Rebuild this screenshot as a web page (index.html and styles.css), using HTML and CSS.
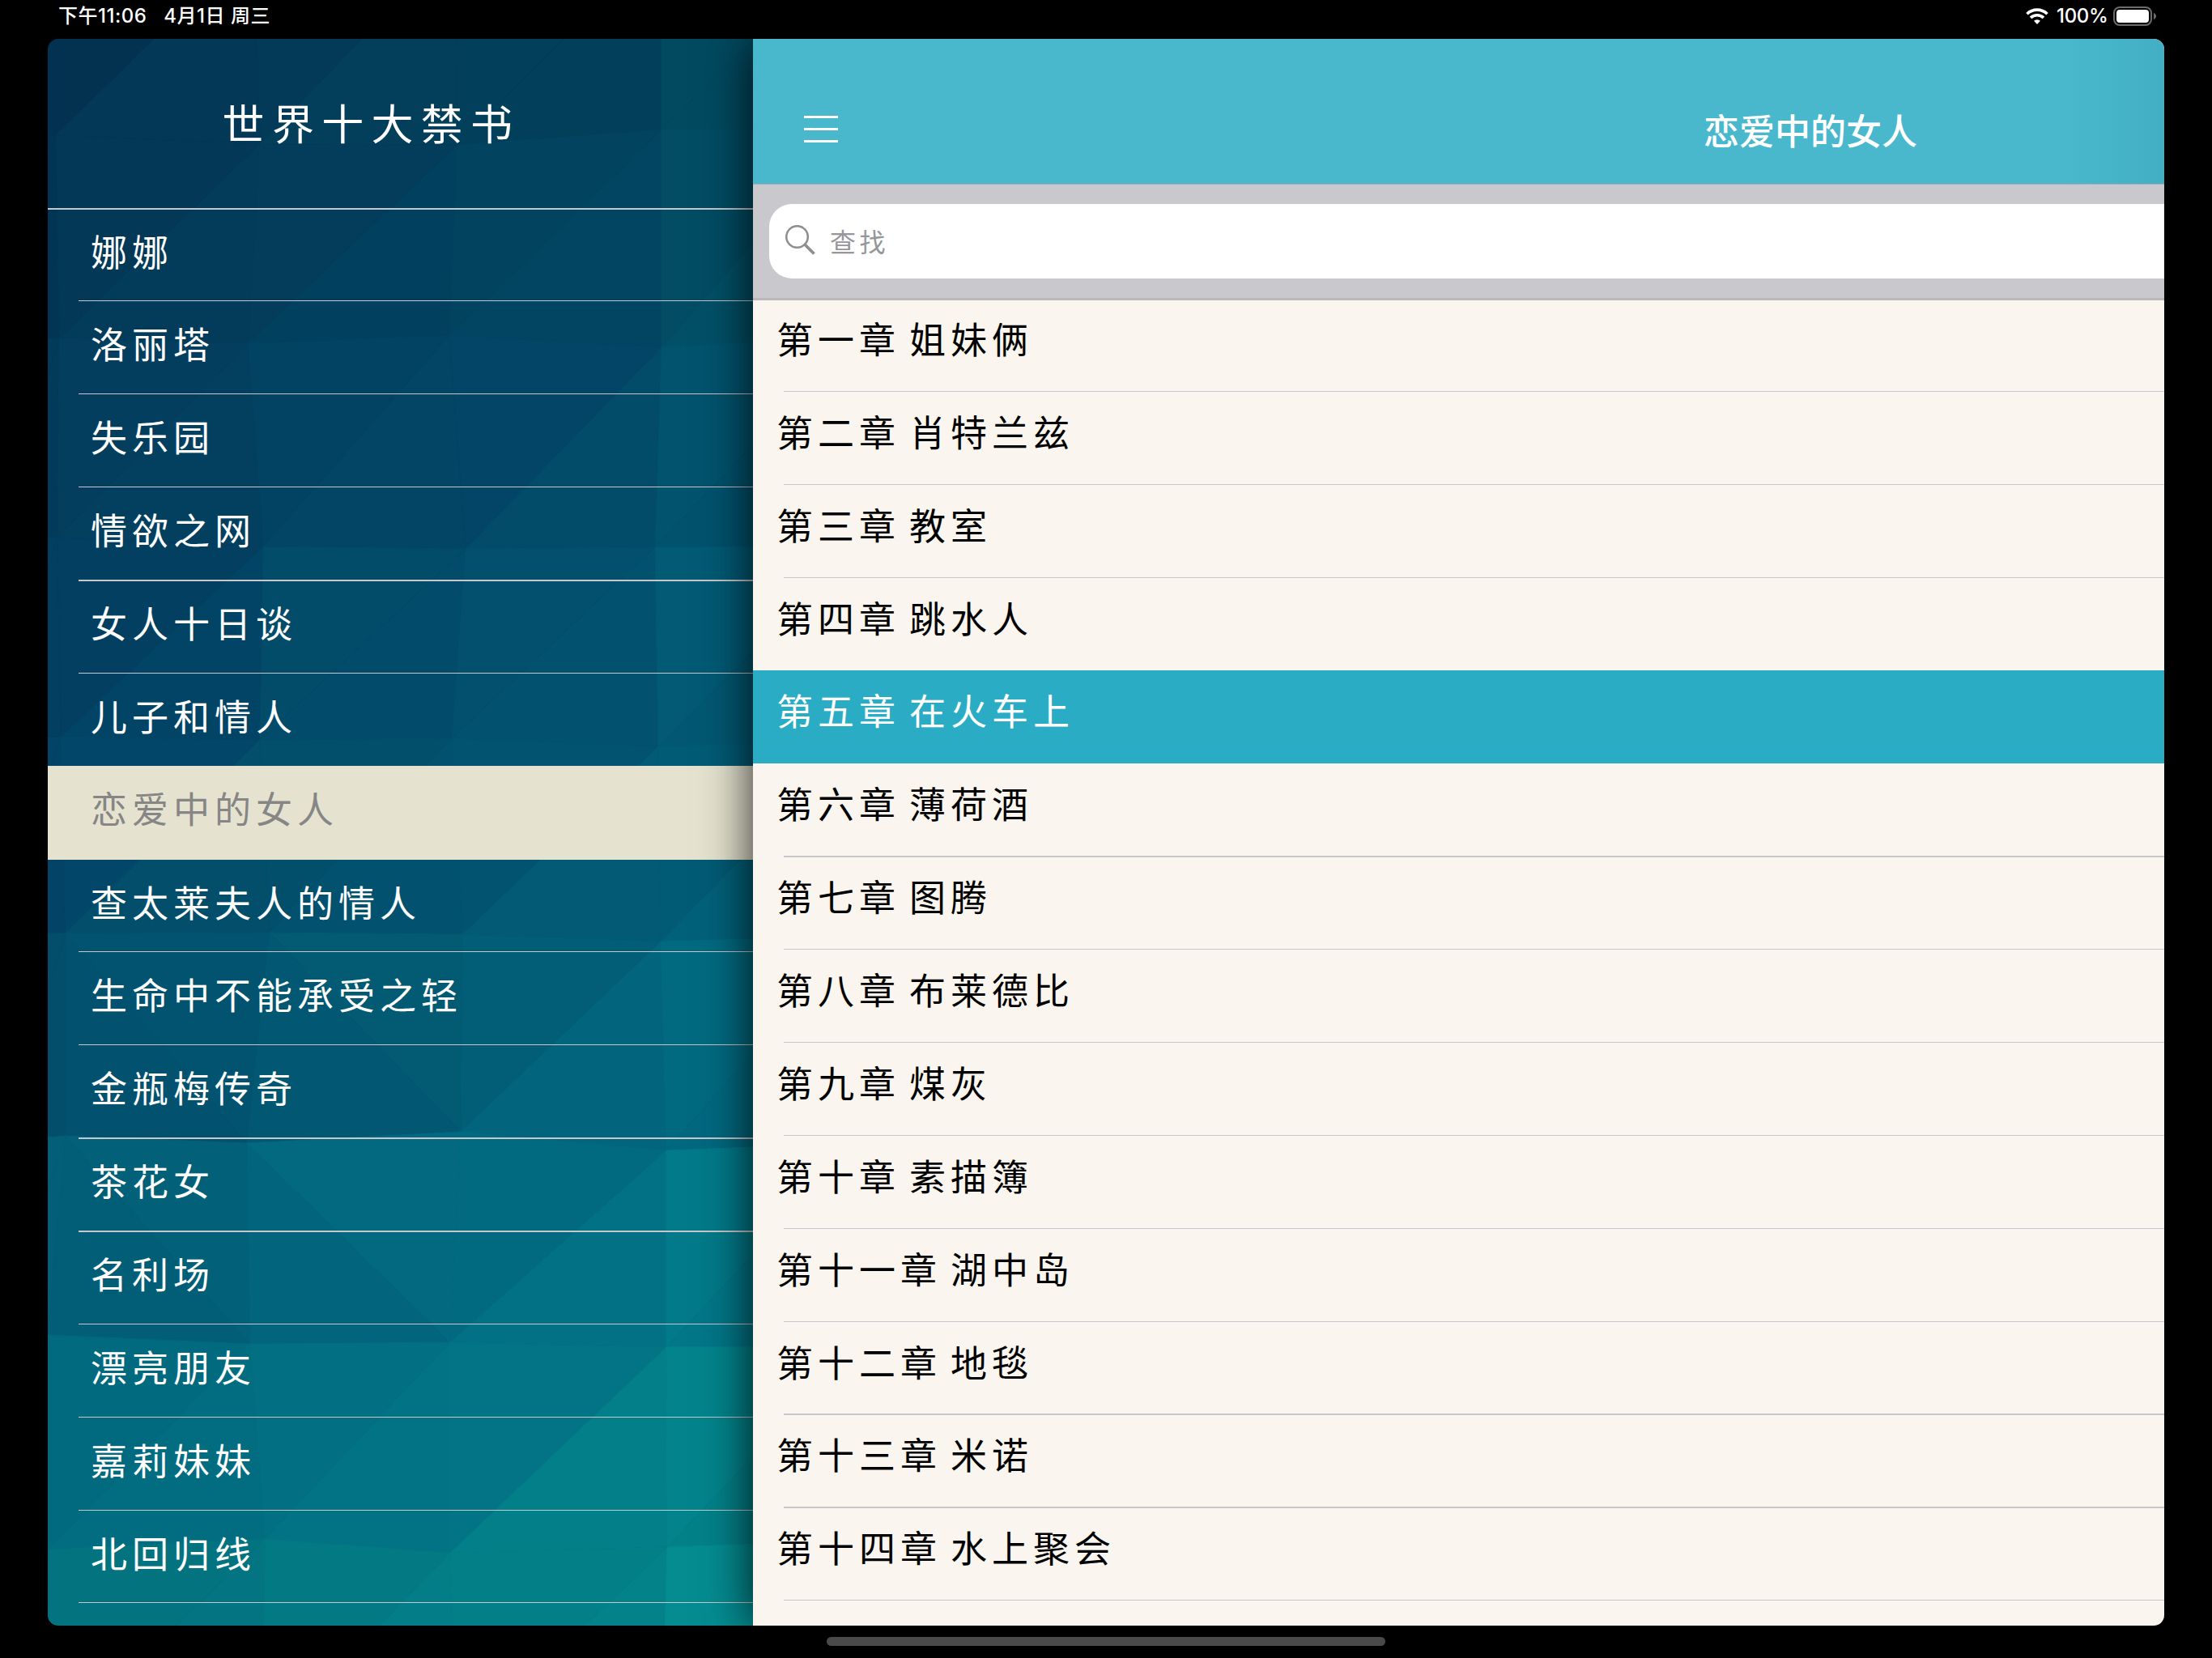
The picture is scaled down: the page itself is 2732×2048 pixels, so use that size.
FILE: index.html
```html
<!DOCTYPE html>
<html lang="zh-CN">

<head>
  <meta charset="UTF-8">
  <meta name="viewport" content="width=device-width, initial-scale=1.0">
  <title>世界十大禁书</title>

  <link rel="stylesheet" href="styles.css">
</head>

<body>
  <div class="status">
    <p class="time"><span>下午11:06</span><span>4月1日 周三</span></p>
    <div class="power">
      <svg class="wifi" width="28" height="22" viewBox="0 0 28 22">
        <path d="M1.5 8.2a18 18 0 0 1 25 0" />
        <path d="M6 12.900a11.600 11.600 0 0 1 16 0" />
        <path class="dot" d="M14 21l-4-4.200a5.800 5.800 0 0 1 8 0z" />
      </svg>
      <span>100%</span>
      <svg class="battery" width="54" height="24" viewBox="0 0 54 24">
        <rect class="shell" x="1" y="1" width="46" height="22" rx="7" />
        <rect x="4" y="4" width="40" height="16" rx="4" />
        <path class="tip" d="M50 8c4 1.500 4 6.500 0 8z" />
      </svg>
    </div>
  </div>

  <div class="app">
    <div class="side">
      <svg class="poly" width="871" height="1960" viewBox="0 0 871 1960"></svg>
      <h1>世界十大禁书</h1>
      <ul class="books">
        <li><p>娜娜</p></li>
        <li><p>洛丽塔</p></li>
        <li><p>失乐园</p></li>
        <li class="thick"><p>情欲之网</p></li>
        <li><p>女人十日谈</p></li>
        <li class="last"><p>儿子和情人</p></li>
        <li class="on"><p>恋爱中的女人</p></li>
        <li><p>查太莱夫人的情人</p></li>
        <li><p>生命中不能承受之轻</p></li>
        <li class="thick"><p>金瓶梅传奇</p></li>
        <li class="thick"><p>茶花女</p></li>
        <li><p>名利场</p></li>
        <li><p>漂亮朋友</p></li>
        <li><p>嘉莉妹妹</p></li>
        <li><p>北回归线</p></li>
      </ul>
    </div>

    <div class="main">
      <div class="nav">
        <a class="menu" href="#"><i></i><i></i><i></i></a>
        <h2>恋爱中的女人</h2>
      </div>
      <div class="search">
        <div class="field">
          <svg width="38" height="38" viewBox="0 0 38 38">
            <circle cx="14.500" cy="14.500" r="13.300" />
            <path d="M24 24l11.500 11.500" />
          </svg>
          <span>查找</span>
        </div>
      </div>
      <ul class="chapters">
        <li><p>第一章 姐妹俩</p></li>
        <li><p>第二章 肖特兰兹</p></li>
        <li><p>第三章 教室</p></li>
        <li class="last"><p>第四章 跳水人</p></li>
        <li class="on"><p>第五章 在火车上</p></li>
        <li class="thick"><p>第六章 薄荷酒</p></li>
        <li><p>第七章 图腾</p></li>
        <li><p>第八章 布莱德比</p></li>
        <li><p>第九章 煤灰</p></li>
        <li><p>第十章 素描簿</p></li>
        <li><p>第十一章 湖中岛</p></li>
        <li class="thick"><p>第十二章 地毯</p></li>
        <li class="thick"><p>第十三章 米诺</p></li>
        <li><p>第十四章 水上聚会</p></li>
      </ul>
    </div>
  </div>

  <div class="home"></div>

  <script src="script.js"></script>
</body>

</html>
```

FILE: styles.css
```css
* {
  margin: 0;
  padding: 0;
  box-sizing: border-box;
}

body {
  width: 2732px;
  height: 2048px;
  background-color: #000;
  font-family: "Noto Sans CJK SC", sans-serif;
  overflow: hidden;
}

li {
  list-style: none;
}

a {
  text-decoration: none;
}

/* status bar */
.status {
  display: flex;
  justify-content: space-between;
  align-items: center;
  height: 48px;
  padding: 0 68px 8px 72px;
  color: #fff;
  font-family: Inter, "Noto Sans CJK SC", sans-serif;
  font-size: 24px;
  font-weight: 500;
  line-height: 40px;
}

.time {
  display: flex;
  gap: 21px;
  letter-spacing: 0.5px;
}

.power {
  display: flex;
  align-items: center;
}

.power span {
  width: 62px;
  margin: 0 8px 0 10px;
  letter-spacing: -0.3px;
  white-space: nowrap;
}

.wifi path {
  fill: none;
  stroke: #fff;
  stroke-width: 3.6;
}

.wifi .dot {
  fill: #fff;
  stroke: none;
}

.battery {
  fill: #fff;
}

.battery .shell {
  fill: none;
  stroke: #6b6b6b;
  stroke-width: 2;
}

.battery .tip {
  fill: #6b6b6b;
}

.app {
  display: flex;
  width: 2614px;
  height: 1960px;
  margin: 0 59px;
  border-radius: 13px;
  overflow: hidden;
}

/* book list */
.side {
  position: relative;
  flex: none;
  width: 871px;
  color: #fff;
}

.poly {
  position: absolute;
  top: 0;
  left: 0;
  z-index: -1;
}

.side h1 {
  height: 211px;
  padding-right: 72px;
  border-bottom: 2px solid #c8c7cc;
  font-size: 52px;
  font-weight: 400;
  letter-spacing: 9.3px;
  line-height: 205px;
  text-align: center;
}

.books {
  margin-top: -1.5px;
}

.books li,
.chapters li {
  height: 114.86px;
  padding-left: 38px;
}

.books p,
.chapters p {
  height: 114.86px;
  border-bottom: 1px solid #c8c7cc;
  font-size: 45px;
  letter-spacing: 6px;
  white-space: pre;
}

.books p {
  padding-left: 15px;
  line-height: 103px;
}

.books .thick p,
.chapters .thick p {
  height: 115.5px;
  border-bottom-width: 2px;
}

.books .last p,
.books .on p,
.chapters .last p,
.chapters .on p {
  border-bottom: none;
}

/* the selected row covers the line above it */
.books .on,
.chapters .on {
  height: 115.86px;
  margin-top: -1px;
}

.books .on {
  background-color: #e5e3cf;
  color: #868686;
}

.books .last p {
  height: 113.86px;
}

/* chapter list */
.main {
  position: relative;
  flex: 1;
  min-width: 0;
  background-color: #faf5ee;
  box-shadow: 0 0 56px rgba(0, 0, 0, 0.85);
  overflow: hidden;
}

.nav {
  display: grid;
  grid-template-columns: 1fr auto 1fr;
  align-items: center;
  width: 2612px;
  height: 180px;
  padding-top: 44px;
  border-bottom: 1px solid #a9adb0;
  background: linear-gradient(90deg, #49b7cc 1620px, #42afc4 1743px);
  color: #fff;
}

.menu {
  display: flex;
  flex-direction: column;
  gap: 12.4px;
  width: 42px;
  margin-left: 63px;
}

.menu i {
  height: 2.8px;
  background-color: #fff;
}

.nav h2 {
  font-size: 44px;
  font-weight: 500;
  line-height: 60px;
}

.search {
  width: 2612px;
  height: 143px;
  padding: 24px 20px;
  background-color: #c9c8cd;
  border-bottom: 3px solid #b9b9ba;
}

.field {
  display: flex;
  align-items: center;
  height: 92px;
  padding: 0 0 3px 20px;
  border-radius: 28px;
  background-color: #fff;
  color: #96969b;
  font-size: 32px;
  letter-spacing: 4.5px;
}

.field svg {
  margin-right: 17px;
  fill: none;
  stroke: #8e8e93;
  stroke-width: 2.6;
}

.field path {
  stroke-width: 3.8;
}

.chapters {
  margin-top: -1.9px;
}

.chapters p {
  color: #000;
  line-height: 98px;
  text-indent: -9px;
  word-spacing: -5px;
}

.chapters .on {
  background-color: #2bacc5;
}

.chapters .on p {
  color: #fff;
}

.home {
  width: 690px;
  height: 11px;
  margin: 14px auto 0;
  border-radius: 6px;
  background-color: #4a4a4a;
}
```

FILE: script.js
```js
// corner points of the low-poly background, one array per row
const points = [
  [[-60, 0], [10, -126], [254, -120], [505, -120], [758, -120], [1000, -120]],
  [[-60, 127], [10, 119], [262, 130], [506, 131], [758, 112], [1000, 108]],
  [[-60, 372], [14, 370], [247, 376], [496, 366], [758, 381], [1000, 367]],
  [[-60, 614], [12, 616], [266, 627], [516, 630], [750, 628], [1000, 627]],
  [[-60, 864], [16, 862], [262, 866], [499, 864], [754, 874], [1000, 866]],
  [[-60, 1104], [22, 1105], [274, 1104], [512, 1106], [757, 1115], [1000, 1108]],
  [[-60, 1362], [22, 1355], [246, 1364], [510, 1350], [764, 1373], [1000, 1364]],
  [[-60, 1602], [0, 1601], [250, 1612], [497, 1610], [764, 1616], [1000, 1616]],
  [[-60, 1867], [0, 1866], [268, 1853], [497, 1870], [765, 1863], [1000, 1855]],
  [[-60, 2110], [5, 2110], [265, 2110], [505, 2110], [758, 2110], [1000, 2110]]
];

// upper left and lower right triangle of every cell
const colors = [
  ['#023251', '#023251', '#033251', '#033957', '#033a57', '#033e5a', '#023f5b', '#023f5a', '#024a60', '#024a60'],
  ['#023554', '#023554', '#033856', '#033c5a', '#033d5b', '#02405f', '#024460', '#024562', '#024c64', '#025067'],
  ['#023a5a', '#023a5a', '#033e5e', '#033f5f', '#024262', '#024565', '#024566', '#024b69', '#02536e', '#02526e'],
  ['#023f60', '#023f60', '#023f61', '#024465', '#024b69', '#024b6a', '#02506d', '#02516e', '#025a75', '#025872'],
  ['#024366', '#024366', '#024769', '#024e6b', '#024f6c', '#02526f', '#025370', '#025a75', '#025b75', '#02617a'],
  ['#024e6b', '#024e6b', '#025370', '#02516f', '#025a73', '#025872', '#025d77', '#02647d', '#026a80', '#02687f'],
  ['#025f77', '#025f77', '#026079', '#025e77', '#026980', '#02657d', '#026a80', '#027085', '#027a89', '#027788'],
  ['#026a7c', '#026a7c', '#026a7e', '#026d81', '#026f82', '#027385', '#027485', '#037f89', '#03848c', '#038189'],
  ['#03737f', '#03737f', '#037380', '#037481', '#037983', '#037d87', '#037f88', '#038289', '#048c91', '#04888d']
];

const svg = document.querySelector('.poly');

function triangle(a, b, c, color) {
  const el = document.createElementNS('http://www.w3.org/2000/svg', 'polygon');
  el.setAttribute('points', [a, b, c].join(' '));
  el.setAttribute('fill', color);
  // same colour stroke closes the seams
  el.setAttribute('stroke', color);
  svg.appendChild(el);
}

for (let r = 0; r < colors.length; r++) {
  for (let c = 0; c < 5; c++) {
    const tl = points[r][c];
    const tr = points[r][c + 1];
    const bl = points[r + 1][c];
    const br = points[r + 1][c + 1];
    const [one, two] = colors[r].slice(c * 2, c * 2 + 2);

    // a few cells are split the other way
    if ((r === 5 || r === 6) && (c === 1 || c === 2)) {
      triangle(tl, bl, br, two);
      triangle(tl, tr, br, one);
    } else {
      triangle(tl, tr, bl, one);
      triangle(tr, br, bl, two);
    }
  }
}
```
